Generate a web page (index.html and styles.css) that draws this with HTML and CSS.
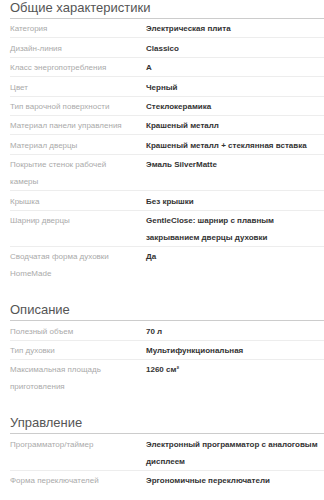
FILE: index.html
```html
<!DOCTYPE html>
<html lang="ru">
<head>
    <meta charset="UTF-8">
    <meta name="viewport" content="width=device-width, initial-scale=1.0">
    <title>Характеристики</title>
    <link rel="stylesheet" href="styles.css">
</head>
<body>
    <div class="specs">
        <div class="section">
            <h2 class="section-title">Общие характеристики</h2>
            <div class="row"><span class="label">Категория</span><span class="value">Электрическая плита</span></div>
            <div class="row"><span class="label">Дизайн-линия</span><span class="value">Classico</span></div>
            <div class="row"><span class="label">Класс энергопотребления</span><span class="value">A</span></div>
            <div class="row"><span class="label">Цвет</span><span class="value">Черный</span></div>
            <div class="row"><span class="label">Тип варочной поверхности</span><span class="value">Стеклокерамика</span></div>
            <div class="row"><span class="label">Материал панели управления</span><span class="value">Крашеный металл</span></div>
            <div class="row"><span class="label">Материал дверцы</span><span class="value">Крашеный металл + стеклянная вставка</span></div>
            <div class="row"><span class="label">Покрытие стенок рабочей камеры</span><span class="value">Эмаль SilverMatte</span></div>
            <div class="row"><span class="label">Крышка</span><span class="value">Без крышки</span></div>
            <div class="row"><span class="label">Шарнир дверцы</span><span class="value">GentleClose: шарнир с плавным закрыванием дверцы духовки</span></div>
            <div class="row"><span class="label">Сводчатая форма духовки HomeMade</span><span class="value">Да</span></div>
        </div>
        <div class="section">
            <h2 class="section-title">Описание</h2>
            <div class="row"><span class="label">Полезный объем</span><span class="value">70 л</span></div>
            <div class="row"><span class="label">Тип духовки</span><span class="value">Мультифункциональная</span></div>
            <div class="row"><span class="label">Максимальная площадь приготовления</span><span class="value">1260 см²</span></div>
        </div>
        <div class="section">
            <h2 class="section-title">Управление</h2>
            <div class="row"><span class="label">Программатор/таймер</span><span class="value">Электронный программатор с аналоговым дисплеем</span></div>
            <div class="row"><span class="label">Форма переключателей</span><span class="value">Эргономичные переключатели</span></div>
        </div>
    </div>
</body>
</html>
```

FILE: styles.css
```css
*{
    margin: 0;
    padding: 0;
    box-sizing: border-box;
}
body{
    background: #fff;
    font-family: "Liberation Sans", Arial, sans-serif;
    overflow: hidden;
}
.specs{
    padding-left: 10px;
}
.section + .section{
    margin-top: 20px;
}
.section-title{
    font-size: 13px;
    font-weight: normal;
    line-height: 16px;
    color: #555;
    padding-bottom: 2px;
    border-bottom: 1px solid #ccc;
}
.row{
    display: grid;
    grid-template-columns: 120px 1fr;
    column-gap: 16px;
    padding: 1.4px 6px 0 0;
    font-size: 8px;
    line-height: 17px;
    border-bottom: 1px solid #ededed;
}
.row:last-child{
    border-bottom: none;
}
.row .label{
    color: #aaa;
}
.row .value{
    color: #333;
    font-weight: bold;
}
```
